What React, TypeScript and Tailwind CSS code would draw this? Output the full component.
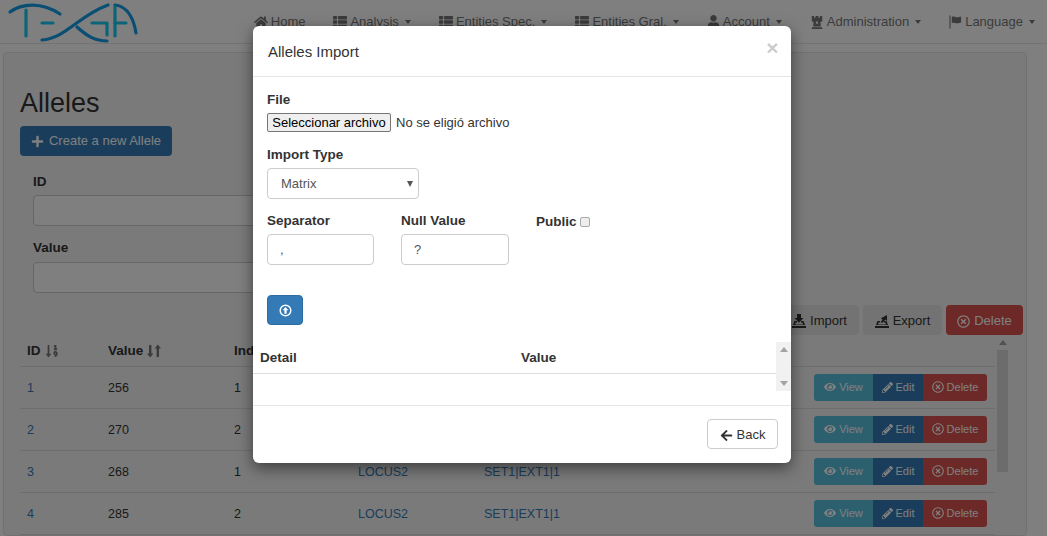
import React from "react";
import { FaHome, FaThList, FaUser, FaChessRook, FaPlus, FaEye, FaPencilAlt, FaRegTimesCircle, FaArrowLeft, FaSortNumericDown } from "react-icons/fa";

function Caret() {
  return <span className="ml-[3px] inline-block h-0 w-0 border-x-[3.5px] border-t-[4px] border-x-transparent border-t-[#777]" />;
}

function FlagIcon({ className }: { className?: string }) {
  return (
    <svg viewBox="0 0 14 14" className={className} fill="currentColor">
      <rect x="0.5" y="0" width="1.2" height="14" />
      <path d="M3 1.5c2-1 3 .2 5 .4 2 .2 3-.4 5-.9v6.6c-2 .7-3 1-5 .7-2-.3-3-1-5-.3z" />
    </svg>
  );
}

function TrayIcon({ up }: { up?: boolean }) {
  return (
    <svg viewBox="0 0 14 14" className="h-[14px] w-[14px]" fill="currentColor">
      <rect x="0" y="12" width="14" height="2" />
      <path d="M1 11l1.5-4h2.5v1.5H3.6L3 10.5h8l-.6-2H9V7h2.5L13 11z" />
      {up ? <path d="M5.5 8.5l2-3-1.6-1.2L12 1v6l-1.5-1.5-3 3.2z" /> : <path d="M5 0h4v4h2.5L7 8.8 2.5 4H5z" />}
    </svg>
  );
}

function SortIcon() {
  return (
    <svg viewBox="0 0 14 14" className="h-[14px] w-[14px] text-[#777]" fill="currentColor">
      <path d="M2 1h2.4v8.5H6.4L3.2 13.5 0 9.5h2z" />
      <path d="M9.6 13V4.5H7.6L10.8.5 14 4.5h-2V13z" />
    </svg>
  );
}

function CircleArrowUp() {
  return (
    <svg viewBox="0 0 14 14" className="h-[13px] w-[13px]" fill="none" stroke="currentColor">
      <circle cx="7" cy="7" r="5.7" strokeWidth="1.6" />
      <path d="M7 3.2L10 6.6H8.2V10.6H5.8V6.6H4z" fill="currentColor" stroke="none" />
    </svg>
  );
}

function NavItem({ icon, label, caret = true }: { icon: React.ReactNode; label: string; caret?: boolean }) {
  return (
    <a className="flex items-center gap-[3px] px-[14px] text-[#777]">
      {icon}
      <span>{label}</span>
      {caret && <Caret />}
    </a>
  );
}

const rows = [
  { id: "1", value: "256", ind: "1", locus: "LOCUS1" },
  { id: "2", value: "270", ind: "2", locus: "LOCUS1" },
  { id: "3", value: "268", ind: "1", locus: "LOCUS2" },
  { id: "4", value: "285", ind: "2", locus: "LOCUS2" },
];

function Logo() {
  return (
    <svg viewBox="0 0 140 44" className="h-[44px] w-[140px] shrink-0" fill="none" strokeWidth="3.2" strokeLinecap="round" strokeLinejoin="round">
      <g stroke="#149ee6">
        <path d="M10 12C22 3 42 2 60 14" />
        <path d="M42 40C66 38 78 16 108 5" />
        <path d="M77 27C87 36 95 41 107 41" />
        <path d="M115 5C128 6 134 20 136 33" />
      </g>
      <g stroke="#16c8f0">
        <path d="M26 10V36" />
        <path d="M42 23H53" />
        <path d="M92 23H107V35" />
        <path d="M115 7V36" />
        <path d="M115 23H126" />
      </g>
    </svg>
  );
}

export default function App() {
  return (
    <div className="relative h-[536px] w-[1047px] overflow-hidden bg-white font-['Liberation_Sans',Arial,sans-serif] text-[13px] leading-[20px] text-[#333]">
      <header className="flex h-[44px] items-center justify-between border-b border-[#e7e7e7] bg-white">
        <Logo />
        <nav className="-mr-[2px] flex items-center">
          <NavItem icon={<FaHome className="h-[14px] w-[14px]" />} label="Home" caret={false} />
          <NavItem icon={<FaThList className="h-[14px] w-[14px]" />} label="Analysis" />
          <NavItem icon={<FaThList className="h-[14px] w-[14px]" />} label="Entities Spec." />
          <NavItem icon={<FaThList className="h-[14px] w-[14px]" />} label="Entities Gral." />
          <NavItem icon={<FaUser className="h-[13px] w-[13px]" />} label="Account" />
          <NavItem icon={<FaChessRook className="h-[14px] w-[14px]" />} label="Administration" />
          <NavItem icon={<FlagIcon className="h-[14px] w-[13px]" />} label="Language" />
        </nav>
      </header>

      <main className="mx-[3px] mt-[8px] w-[1024px] rounded-[4px] border border-[#e3e3e3] bg-[#f5f5f5] px-[16px]">
        <h1 className="mt-[32px] text-[27px] leading-[36px] font-normal">Alleles</h1>
        <button className="mt-[5px] flex h-[30px] w-[152px] items-center justify-center gap-[5px] rounded-[4px] bg-[#337ab7] text-white">
          <FaPlus className="h-[13px] w-[13px]" />
          Create a new Allele
        </button>

        <div className="ml-[13px] mt-[15px] w-[500px] text-[13.5px]">
          <label className="block pt-[1px] font-bold">ID</label>
          <div className="mt-[3px] h-[31px] rounded-[4px] border border-[#ccc] bg-white" />
          <label className="mt-[11px] block pt-[1px] font-bold">Value</label>
          <div className="mt-[4px] h-[31px] rounded-[4px] border border-[#ccc] bg-white" />
        </div>

        <div className="-mr-[13px] mt-[12px] flex justify-end gap-[4px]">
          <button className="flex h-[30px] w-[79px] items-center justify-center gap-[4px] rounded-[4px] bg-[#e6e6e6] pt-[2px]"><TrayIcon />Import</button>
          <button className="flex h-[30px] w-[79px] items-center justify-center gap-[4px] rounded-[4px] bg-[#e6e6e6] pt-[2px]"><TrayIcon up />Export</button>
          <button className="flex h-[30px] w-[77px] items-center justify-center gap-[4px] rounded-[4px] bg-[#d9534f] pt-[2px] text-white"><FaRegTimesCircle className="h-[13px] w-[13px]" />Delete</button>
        </div>

        <div className="mt-[2px] flex">
          <table className="w-[975px] table-fixed border-collapse text-[12.5px]">
            <colgroup>
              <col className="w-[81px]" />
              <col className="w-[126px]" />
              <col className="w-[124px]" />
              <col className="w-[126px]" />
              <col className="w-[330px]" />
              <col className="w-[188px]" />
            </colgroup>
            <thead>
              <tr className="h-[29px] border-b border-[#ddd] text-left text-[13.5px]">
                <th className="px-[7px] pb-[1px] font-bold"><span className="flex items-center gap-[4px]">ID <FaSortNumericDown className="h-[14px] w-[14px] text-[#777]" /></span></th>
                <th className="px-[7px] pb-[1px] font-bold"><span className="flex items-center gap-[4px]">Value <SortIcon /></span></th>
                <th className="px-[7px] pb-[1px] font-bold">Individual</th>
                <th className="px-[7px] pb-[1px] font-bold">Locus</th>
                <th className="px-[7px] pb-[1px] font-bold">Marker</th>
                <th />
              </tr>
            </thead>
            <tbody>
              {rows.map((r) => (
                <tr key={r.id} className="h-[42px] border-b border-[#ddd]">
                  <td className="px-[7px] pt-[2px]"><a className="text-[#337ab7]">{r.id}</a></td>
                  <td className="px-[7px] pt-[2px]">{r.value}</td>
                  <td className="px-[7px] pt-[2px]">{r.ind}</td>
                  <td className="px-[7px] pt-[2px]"><a className="text-[#337ab7]">{r.locus}</a></td>
                  <td className="px-[7px] pt-[2px]"><a className="text-[#337ab7]">SET1|EXT1|1</a></td>
                  <td className="px-[7px]">
                    <div className="flex h-[27px] text-[11px] text-white">
                      <span className="flex w-[59px] items-center justify-center gap-[3px] rounded-l-[3px] bg-[#5bc0de]"><FaEye className="h-[12px] w-[12px]" />View</span>
                      <span className="flex w-[50px] items-center justify-center gap-[3px] bg-[#337ab7]"><FaPencilAlt className="h-[11px] w-[11px]" />Edit</span>
                      <span className="flex w-[64px] items-center justify-center gap-[3px] rounded-r-[3px] bg-[#d9534f]"><FaRegTimesCircle className="h-[12px] w-[12px]" />Delete</span>
                    </div>
                  </td>
                </tr>
              ))}
            </tbody>
          </table>
          <div className="ml-[2px] flex w-[11px] flex-col items-center pt-[3px]">
            <span className="h-0 w-0 border-x-[4px] border-b-[5px] border-x-transparent border-b-[#a3a3a3]" />
            <span className="mt-[5px] h-[122px] w-[11px] bg-[#d8d8d8]" />
          </div>
        </div>
      </main>

      <div className="absolute inset-0 bg-black/50" />

      <div className="absolute left-[253px] top-[26px] w-[538px] rounded-[6px] bg-white shadow-[0_5px_15px_rgba(0,0,0,0.5)]">
        <div className="relative h-[51px] border-b border-[#e5e5e5] pl-[15px] pt-[15px] text-[15px] leading-[21px]">
          Alleles Import
          <span className="absolute right-[12.5px] top-[11px] text-[21px] font-bold leading-[21px] text-[#000] opacity-20">×</span>
        </div>
        <div className="px-[14px] pt-[13px] text-[13.5px]">
          <label className="block font-bold">File</label>
          <div className="mt-[2px] flex h-[20px] items-center text-[13px]">
            <span className="flex h-[19px] w-[124px] items-center justify-center rounded-[2px] border border-[#767676] bg-[#efefef] pt-[1px] leading-[16px] text-black">Seleccionar archivo</span>
            <span className="ml-[5px] pt-[2px] leading-[18px] text-[#333]">No se eligió archivo</span>
          </div>
          <label className="mt-[13px] block font-bold">Import Type</label>
          <div className="relative mt-[3px] w-[152px]">
            <select className="block h-[31px] w-[152px] appearance-none rounded-[4px] border border-[#ccc] bg-white px-[13px] text-[13px] text-[#555]">
              <option>Matrix</option>
            </select>
            <span className="absolute right-[6px] top-[13px] h-0 w-0 border-x-[3px] border-t-[6px] border-x-transparent border-t-[#555]" />
          </div>
          <div className="mt-[11px] flex">
            <div className="w-[107px]">
              <label className="block pt-[1px] font-bold">Separator</label>
              <input readOnly value="," className="mt-[3px] block h-[31px] w-[107px] rounded-[4px] border border-[#ccc] px-[12px] text-[13px] text-[#555]" />
            </div>
            <div className="ml-[27px] w-[108px]">
              <label className="block pt-[1px] font-bold">Null Value</label>
              <input readOnly value="?" className="mt-[3px] block h-[31px] w-[108px] rounded-[4px] border border-[#ccc] px-[12px] text-[13px] text-[#555]" />
            </div>
            <div className="ml-[27px] flex h-[20px] items-center pt-[4px]">
              <span className="font-bold">Public</span>
              <input type="checkbox" className="ml-[3px] h-[10px] w-[10px] appearance-none rounded-[2px] border border-[#aaa] bg-[#eee]" />
            </div>
          </div>
          <button className="mt-[30px] flex h-[30px] w-[36px] items-center justify-center rounded-[4px] border border-[#2e6da4] bg-[#337ab7] text-white">
            <CircleArrowUp />
          </button>
        </div>
        <div className="mt-[17px] flex h-[49px]">
          <div className="flex-1">
            <div className="flex h-[32px] items-end border-b border-[#ddd] pb-[5px] pl-[7px] text-[13.5px] font-bold">
              <span className="w-[261px]">Detail</span>
              <span>Value</span>
            </div>
          </div>
          <div className="flex w-[15px] flex-col items-center justify-between bg-[#f1f1f1] py-[5px]">
            <span className="h-0 w-0 border-x-[4px] border-b-[5px] border-x-transparent border-b-[#a3a3a3]" />
            <span className="h-0 w-0 border-x-[4px] border-t-[5px] border-x-transparent border-t-[#a3a3a3]" />
          </div>
        </div>
        <div className="mt-[14px] flex h-[58px] justify-end border-t border-[#e5e5e5] pr-[13px] pt-[13px]">
          <button className="flex h-[30px] w-[71px] items-center justify-center gap-[4px] rounded-[4px] border border-[#ccc] bg-white pt-[2px]">
            <FaArrowLeft className="h-[13px] w-[13px]" />
            Back
          </button>
        </div>
      </div>
    </div>
  );
}
